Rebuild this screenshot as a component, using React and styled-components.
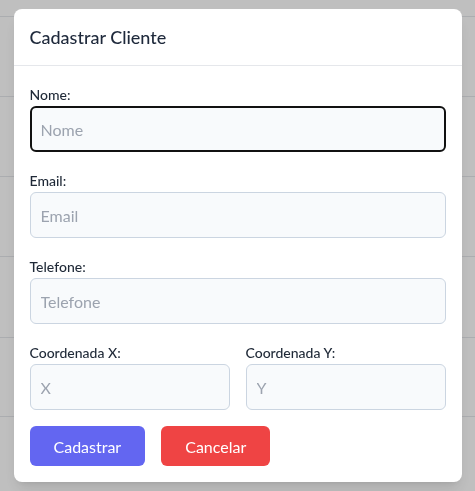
import React from 'react';
import styled, { createGlobalStyle } from 'styled-components';

const GlobalStyle = createGlobalStyle`
  * {
    box-sizing: border-box;
  }
  body {
    margin: 0;
    background: #ffffff;
    font-family: 'Segoe UI', Lato, 'Noto Sans', sans-serif;
  }
`;

const Page = styled.div`
  height: 491px;
  overflow: hidden;
`;

const TableRow = styled.div`
  height: ${(props) => props.height}px;
  border-bottom: 1px solid #e5e7eb;
`;

const Overlay = styled.div`
  position: fixed;
  inset: 0;
  background: rgba(0, 0, 0, 0.25);
  display: flex;
  align-items: center;
  justify-content: center;
`;

const Modal = styled.div`
  width: 448px;
  background: #ffffff;
  border-radius: 8px;
  box-shadow: 0 10px 15px -3px rgba(0, 0, 0, 0.1), 0 4px 6px -4px rgba(0, 0, 0, 0.1);
`;

const Header = styled.div`
  height: 57px;
  padding: 0 16px;
  display: flex;
  align-items: center;
  border-bottom: 1px solid #e5e7eb;
`;

const Title = styled.h2`
  margin: 0;
  font-size: 18px;
  font-weight: 500;
  color: #1e293b;
`;

const Body = styled.div`
  padding: 16px;
  display: flex;
  flex-direction: column;
  gap: 16px;
`;

const Field = styled.div`
  display: flex;
  flex-direction: column;
  gap: 1px;
  flex: 1;
`;

const Label = styled.label`
  padding-top: 3px;
  font-size: 14px;
  line-height: 20px;
  font-weight: 500;
  color: #1f2937;
`;

const Input = styled.input`
  height: 46px;
  width: 100%;
  padding: 0 10px;
  font-family: inherit;
  font-size: 16px;
  color: #1f2937;
  background: #f8fafc;
  border: 1px solid #cbd5e1;
  border-radius: 6px;
  outline: none;

  &::placeholder {
    color: #9ca3af;
  }

  &:focus {
    border: 2px solid #111111;
    padding: 0 9px;
  }
`;

const Row = styled.div`
  display: flex;
  gap: 16px;
`;

const Button = styled.button`
  height: 40px;
  padding: 0 24px;
  border: none;
  border-radius: 6px;
  font-family: inherit;
  font-size: 16px;
  color: #ffffff;
  background: ${(props) => props.color};
  cursor: pointer;
`;

const App = () => {
  return (
    <>
      <GlobalStyle />
      <Page>
        <TableRow height={17} />
        <TableRow height={80} />
        <TableRow height={80} />
        <TableRow height={80} />
        <TableRow height={81} />
        <TableRow height={79} />
      </Page>
      <Overlay>
        <Modal>
          <Header>
            <Title>Cadastrar Cliente</Title>
          </Header>
          <Body>
            <Field>
              <Label>Nome:</Label>
              <Input placeholder="Nome" autoFocus />
            </Field>
            <Field>
              <Label>Email:</Label>
              <Input placeholder="Email" />
            </Field>
            <Field>
              <Label>Telefone:</Label>
              <Input placeholder="Telefone" />
            </Field>
            <Row>
              <Field>
                <Label>Coordenada X:</Label>
                <Input placeholder="X" />
              </Field>
              <Field>
                <Label>Coordenada Y:</Label>
                <Input placeholder="Y" />
              </Field>
            </Row>
            <Row>
              <Button color="#6366f1">Cadastrar</Button>
              <Button color="#ef4444">Cancelar</Button>
            </Row>
          </Body>
        </Modal>
      </Overlay>
    </>
  );
};

export default App;
